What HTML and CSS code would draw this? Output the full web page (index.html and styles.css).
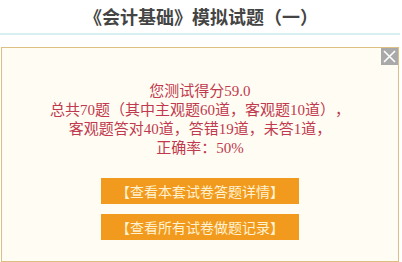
FILE: index.html
```html
<!DOCTYPE html>
<html>
<head>
    <meta charset="UTF-8">
    <title>模拟试题</title>
    <link rel="stylesheet" href="styles.css">
</head>
<body>
<div class="head">《会计基础》模拟试题（一）</div>
<div class="rule"></div>
<div class="dlg">
    <span class="close">
        <svg width="17" height="17" viewBox="0 0 17 17"><path d="M3 3L14 14M14 3L3 14" stroke="#fff" stroke-width="1.6"/></svg>
    </span>
    <div class="msg">
        <p>您测试得分59.0</p>
        <p>总共70题（其中主观题60道，客观题10道），</p>
        <p>客观题答对40道，答错19道，未答1道，</p>
        <p>正确率：50%</p>
    </div>
    <div class="btns">
        <a class="btn">【查看本套试卷答题详情】</a>
        <a class="btn">【查看所有试卷做题记录】</a>
    </div>
</div>
</body>
</html>
```

FILE: styles.css
```css
body{margin:0;background:#fff;overflow:hidden;text-spacing-trim:space-all;}
.head{height:33px;line-height:32px;text-align:center;font-size:18px;font-weight:bold;color:#444;
    font-family:"Noto Sans CJK SC",sans-serif;}
.rule{height:2px;background:#d8eff1;margin-right:2px;}
.dlg{position:relative;margin:12px 3px 0 1px;height:213px;border:1px solid #dcbf82;background:#fffdf3;}
.close{position:absolute;top:0;right:0;width:17px;height:17px;background:#a9a9a9;display:block;}
.close svg{display:block;}
.msg{padding-top:34px;text-align:center;color:#c0394e;font:15px/19px "Liberation Serif","Noto Sans CJK SC",serif;}
.msg p{margin:0;}
.btns{display:flex;flex-direction:column;align-items:center;gap:10px;margin-top:20px;}
.btn{display:block;width:198px;height:26px;line-height:26px;text-align:center;background:#f29a1d;color:#fff2d2;
    font-size:14px;font-family:"Noto Sans CJK SC",sans-serif;}
```
